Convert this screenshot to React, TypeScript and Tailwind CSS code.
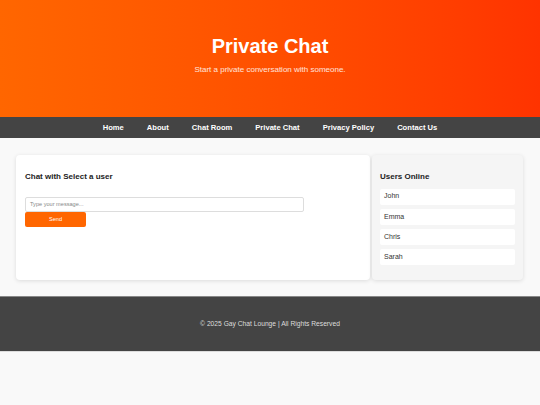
import React from "react";

export default function App() {
  const navItems = ["Home", "About", "Chat Room", "Private Chat", "Privacy Policy", "Contact Us"];
  const users = ["John", "Emma", "Chris", "Sarah"];
  return (
    <div className="min-h-[405px] bg-[#f9f9f9] font-['Liberation_Sans',Arial,sans-serif]">
      <header className="h-[117px] bg-gradient-to-r from-[#ff6600] to-[#ff3300] text-white flex flex-col items-center pt-[36px]">
        <h1 className="text-[20px] leading-[20px] font-bold">Private Chat</h1>
        <p className="mt-[10px] text-[8px] leading-[8px] text-white/85">Start a private conversation with someone.</p>
      </header>
      <nav className="h-[21px] bg-[#444444] flex justify-center items-center gap-[23px]">
        {navItems.map((n) => (
          <span key={n} className="text-white font-bold text-[7.6px] leading-[8px]">{n}</span>
        ))}
      </nav>
      <main className="flex pl-[16px] pr-[17px] pt-[17px] pb-[16px] gap-[2px]">
        <section className="flex-1 bg-white rounded-[4px] shadow-[0_1px_4px_rgba(0,0,0,0.12)] pt-[17.5px] px-[9px]">
          <h3 className="text-[8px] leading-[8px] font-bold text-[#222]">Chat with Select a user</h3>
          <div className="mt-[16.5px] w-[279px] h-[15px] border border-[#dddddd] rounded-[2px] flex items-center pl-[4px]">
            <span className="text-[5.6px] text-[#888]">Type your message...</span>
          </div>
          <div className="w-[61px] h-[15px] bg-[#ff6600] rounded-[2px] flex items-center justify-center">
            <span className="text-[5.6px] text-white">Send</span>
          </div>
        </section>
        <aside className="w-[151px] bg-[#f5f5f5] rounded-[4px] shadow-[0_1px_4px_rgba(0,0,0,0.12)] pt-[17.5px] px-[8px] pb-[15px]">
          <h3 className="text-[8px] leading-[8px] font-bold text-[#222]">Users Online</h3>
          <div className="mt-[8px] flex flex-col gap-[4.3px]">
            {users.map((u) => (
              <div key={u} className="h-[16px] bg-white rounded-[2px] flex items-center pl-[4px]">
                <span className="text-[7px] text-[#333]">{u}</span>
              </div>
            ))}
          </div>
        </aside>
      </main>
      <footer className="h-[56px] bg-[#444444] border-t border-[#888888] border-b-[1px] border-b-[#dddddd] flex items-center justify-center">
        <span className="text-[6.7px] text-[#dddddd]">© 2025 Gay Chat Lounge | All Rights Reserved</span>
      </footer>
    </div>
  );
}
